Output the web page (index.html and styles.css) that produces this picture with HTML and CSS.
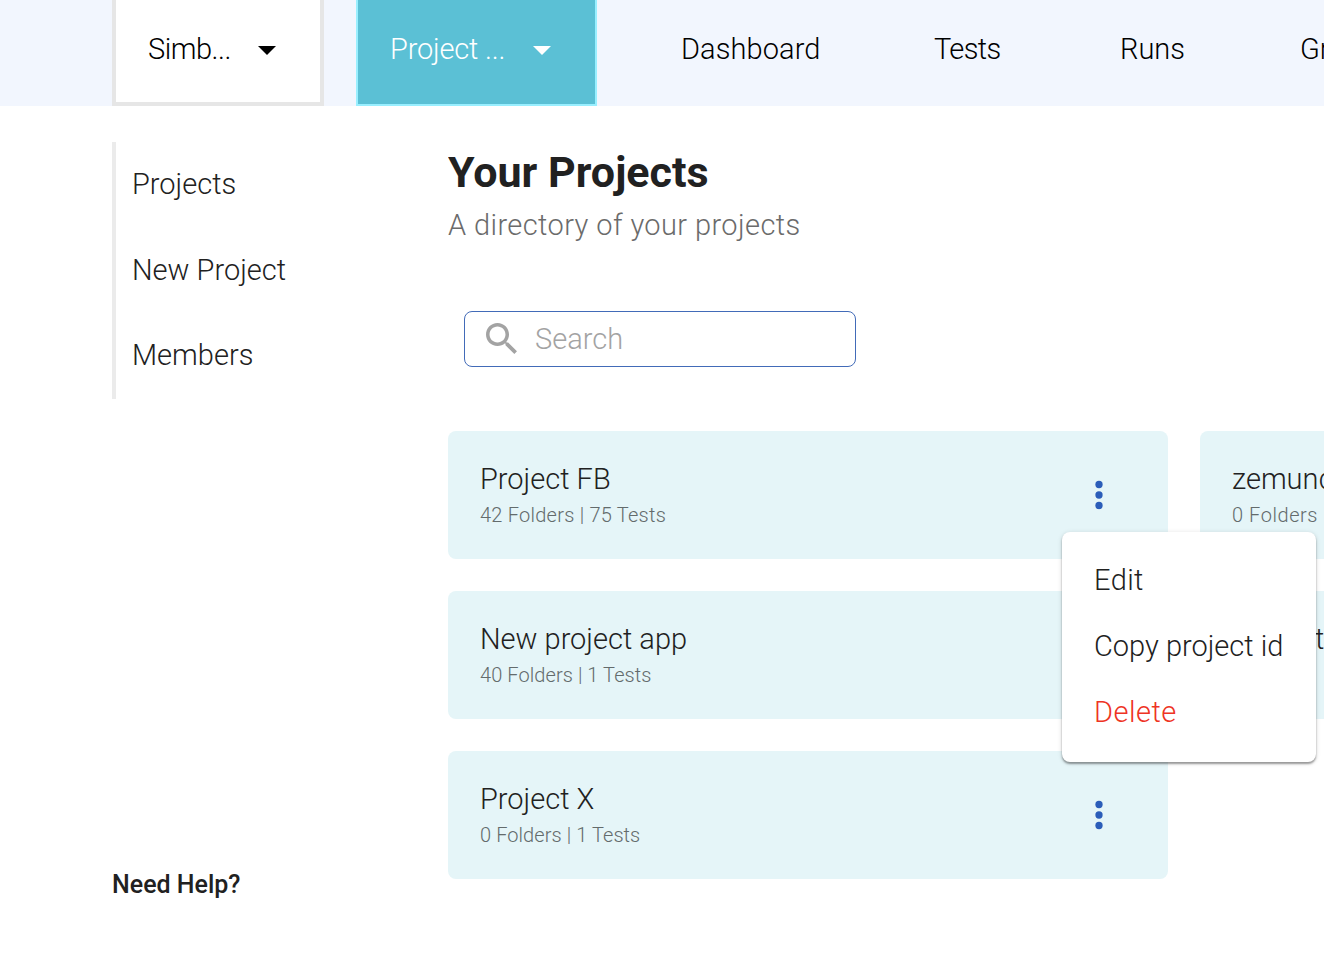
FILE: index.html
```
<!DOCTYPE html>
<html lang="en">
<head>
<meta charset="utf-8">
<title>Your Projects</title>
<link rel="stylesheet" href="styles.css">
</head>
<body>
<header class="topbar">
  <button class="picker picker-org"><span class="picker-label">Simb...</span><svg class="caret" viewBox="0 0 18 9"><path d="M0 0h18L9 9z"/></svg></button>
  <button class="picker picker-project"><span class="picker-label">Project ...</span><svg class="caret" viewBox="0 0 18 9"><path d="M0 0h18L9 9z"/></svg></button>
  <nav class="nav">
    <a class="nav-link nav-dashboard">Dashboard</a>
    <a class="nav-link nav-tests">Tests</a>
    <a class="nav-link nav-runs">Runs</a>
    <a class="nav-link nav-groups">Gr</a>
  </nav>
</header>
<div class="page">
  <aside class="sidebar">
    <nav class="side-nav">
      <a class="side-link">Projects</a>
      <a class="side-link">New Project</a>
      <a class="side-link">Members</a>
    </nav>
    <a class="help">Need Help?</a>
  </aside>
  <main class="main">
    <h1 class="title">Your Projects</h1>
    <p class="subtitle">A directory of your projects</p>
    <div class="search">
      <svg class="search-icon" viewBox="3 3 17.5 17.5"><path d="M15.5 14h-.79l-.28-.27C15.41 12.59 16 11.11 16 9.5 16 5.91 13.09 3 9.5 3S3 5.91 3 9.5 5.91 16 9.5 16c1.61 0 3.09-.59 4.23-1.57l.27.28v.79l5 4.99L20.49 19l-4.99-5zm-6 0C7.01 14 5 11.99 5 9.5S7.01 5 9.5 5 14 7.01 14 9.5 11.99 14 9.5 14z"/></svg>
      <span class="search-text">Search</span>
    </div>
    <div class="grid">
      <article class="card">
        <div class="card-text"><h2 class="card-title">Project FB</h2><p class="card-meta meta-wide">42 Folders | 75 Tests</p></div>
        <svg class="dots" viewBox="0 0 8 30"><circle cx="4" cy="4.5" r="3.65"/><circle cx="4" cy="15" r="3.65"/><circle cx="4" cy="25.5" r="3.65"/></svg>
        <div class="menu">
          <a class="menu-item menu-edit">Edit</a>
          <a class="menu-item">Copy project id</a>
          <a class="menu-item menu-delete">Delete</a>
        </div>
      </article>
      <article class="card card-edge">
        <div class="card-text"><h2 class="card-title">zemund</h2><p class="card-meta meta-loose">0 Folders</p></div>
      </article>
      <article class="card">
        <div class="card-text"><h2 class="card-title">New project app</h2><p class="card-meta">40 Folders | 1 Tests</p></div>
      </article>
      <article class="card card-edge">
        <div class="card-text"><h2 class="card-title title-end">t</h2><p class="card-meta">&nbsp;</p></div>
      </article>
      <article class="card">
        <div class="card-text"><h2 class="card-title">Project X</h2><p class="card-meta">0 Folders | 1 Tests</p></div>
        <svg class="dots" viewBox="0 0 8 30"><circle cx="4" cy="4.5" r="3.65"/><circle cx="4" cy="15" r="3.65"/><circle cx="4" cy="25.5" r="3.65"/></svg>
      </article>
    </div>
  </main>
</div>
</body>
</html>
```
FILE: styles.css
```
* { box-sizing: border-box; }
body {
  margin: 0;
  height: 956px;
  overflow: hidden;
  background: #fff;
  color: #212121;
  font: 350 29px Roboto, sans-serif;
}
h1, h2, p { margin: 0; }

.topbar {
  display: flex;
  height: 106px;
  padding-left: 112px;
  overflow: hidden;
  background: #f2f6fe;
  color: #000;
}
.picker {
  display: flex;
  flex: none;
  justify-content: space-between;
  margin: 0;
  height: 106px;
  font: inherit;
  line-height: 98px;
  text-align: left;
}
.picker-org {
  width: 212px;
  padding: 0 44px 0 32px;
  border: 4px solid #e6e6e6;
  border-top: 0;
  background: #fff;
  color: #000;
  letter-spacing: -0.5px;
}
.picker-project {
  width: 241px;
  margin-left: 32px;
  padding: 0 44px 0 32px;
  border: 2px solid #99efff;
  border-top: 0;
  background: #5bc0d5;
  color: #fff;
  letter-spacing: -0.2px;
}
.caret { flex: none; width: 18px; height: 9px; margin-top: 46px; fill: currentColor; }

.nav { display: flex; flex: 1; min-width: 0; padding-left: 84px; line-height: 98px; }
.nav-link { flex: none; }
.nav-dashboard { width: 253px; letter-spacing: 0.1px; }
.nav-tests { width: 186px; letter-spacing: -0.6px; }
.nav-runs { width: 180px; }
.nav-groups { flex: 1; min-width: 0; overflow: hidden; }

.page { display: flex; height: 850px; padding: 36px 0 0 112px; }
.sidebar {
  display: flex;
  flex: none;
  flex-direction: column;
  justify-content: space-between;
  width: 336px;
  padding-bottom: 56px;
}
.side-nav {
  display: flex;
  flex-direction: column;
  height: 257px;
  padding-left: 16px;
  border-left: 4px solid #ebebeb;
}
.side-link { flex: 1; line-height: 85px; }
.help { font-size: 25px; font-weight: 500; line-height: 30px; }

.main { flex: 1; min-width: 0; overflow: hidden; }
.title { font-size: 43px; font-weight: 700; line-height: 60px; }
.subtitle {
  padding-top: 2px;
  color: #6b6b6b;
  line-height: 42px;
  letter-spacing: 0.4px;
}
.search {
  display: flex;
  align-items: center;
  width: 392px;
  height: 56px;
  margin: 65px 0 64px 16px;
  padding-left: 21px;
  border: 1px solid #426bb8;
  border-radius: 8px;
  color: #a3a3a3;
}
.search-icon { width: 31px; height: 31px; margin: -1px 18px 0 0; fill: #a3a3a3; }

.grid { display: grid; grid-template-columns: 720px minmax(0, 1fr); gap: 32px; }
.card {
  position: relative;
  display: flex;
  justify-content: space-between;
  align-items: center;
  height: 128px;
  padding: 0 65px 0 32px;
  border-radius: 8px;
  background: #e5f5f8;
}
.card-edge { padding-right: 0; border-radius: 8px 0 0 8px; overflow: hidden; }
.card-text { padding-top: 4px; }
.card-title {
  font-size: 29px;
  font-weight: 350;
  line-height: 36px;
}
.title-end { padding-left: 83px; }
.card-meta {
  color: #636b6c;
  font-size: 20px;
  font-weight: 350;
  line-height: 36px;
  letter-spacing: 0.08px;
}
.meta-wide { letter-spacing: 0.24px; }
.meta-loose { letter-spacing: 0.55px; }
.dots { width: 8px; height: 30px; fill: #2b5db9; }

.menu {
  position: absolute;
  z-index: 1;
  top: 101px;
  left: 614px;
  display: flex;
  flex-direction: column;
  width: 254px;
  height: 230px;
  padding: 15px 0 0 32px;
  border-radius: 8px;
  background: #fff;
  box-shadow: 0 2px 2px rgba(0, 0, 0, 0.35), 0 1px 5px rgba(0, 0, 0, 0.15);
}
.menu-item { line-height: 66px; white-space: nowrap; }
.menu-edit { letter-spacing: 0.4px; }
.menu-delete { color: #ee3324; letter-spacing: 0.5px; }
```
